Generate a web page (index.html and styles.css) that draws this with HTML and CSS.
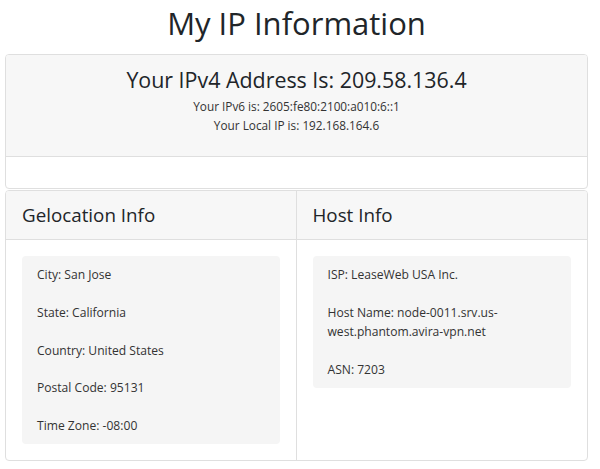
FILE: index.html
```html
<!DOCTYPE html>
<html>
<head>
<meta charset="utf-8">
<link rel="stylesheet" href="styles.css">
</head>
<body>
<div class="page">
  <h1 class="title">My IP Information</h1>
  <div class="card">
    <div class="card-header ip-header">
      <h2 class="ipv4">Your IPv4 Address Is: 209.58.136.4</h2>
      <p class="sub">Your IPv6 is: 2605:fe80:2100:a010:6::1</p>
      <p class="sub">Your Local IP is: 192.168.164.6</p>
    </div>
    <div class="card-body empty"></div>
  </div>
  <div class="card split">
    <div class="col col-left">
      <div class="card-header col-header"><h3>Gelocation Info</h3></div>
      <div class="col-body">
        <div class="well">
          <p>City: San Jose</p>
          <p>State: California</p>
          <p>Country: United States</p>
          <p>Postal Code: 95131</p>
          <p>Time Zone: -08:00</p>
        </div>
      </div>
    </div>
    <div class="col">
      <div class="card-header col-header"><h3>Host Info</h3></div>
      <div class="col-body">
        <div class="well">
          <p>ISP: LeaseWeb USA Inc.</p>
          <p>Host Name: node-0011.srv.us-west.phantom.avira-vpn.net</p>
          <p>ASN: 7203</p>
        </div>
      </div>
    </div>
  </div>
</div>
</body>
</html>
```

FILE: styles.css
```css
html, body {
  margin: 0;
  padding: 0;
  background: #ffffff;
}
body {
  font-family: "Open Sans", "Noto Sans", sans-serif;
  color: #212529;
}
.page {
  width: 583px;
  margin-left: 5px;
}
.title {
  margin: 0;
  height: 54px;
  font-size: 31px;
  font-weight: 500;
  line-height: 46px;
  text-align: center;
}
.card {
  border: 1px solid #dfdfdf;
  border-radius: 4px;
  overflow: hidden;
  background: #fff;
}
.card-header {
  background: #f7f7f7;
  border-bottom: 1px solid #dfdfdf;
}
.ip-header {
  text-align: center;
  padding: 13px 16px 21px;
}
.ipv4 {
  margin: 0 0 5px;
  font-size: 21.4px;
  font-weight: 500;
  line-height: 24px;
}
.sub {
  margin: 0;
  font-size: 11.8px;
  line-height: 19px;
  color: #333;
}
.empty {
  height: 31px;
}
.split {
  margin-top: 1px;
  display: grid;
  grid-template-columns: 1fr 1fr;
}
.col-left {
  border-right: 1px solid #dfdfdf;
}
.col-header {
  padding: 12px 16px;
}
.col-header h3 {
  margin: 0;
  font-size: 18.8px;
  font-weight: 500;
  line-height: 24px;
}
.col-body {
  padding: 16px;
}
.well {
  background: #f5f5f5;
  border-radius: 4px;
  padding: 9px 15px;
  display: flex;
  flex-direction: column;
  gap: 18.75px;
}
.well p {
  margin: 0;
  font-size: 12.1px;
  line-height: 19px;
  color: #333;
}
```
